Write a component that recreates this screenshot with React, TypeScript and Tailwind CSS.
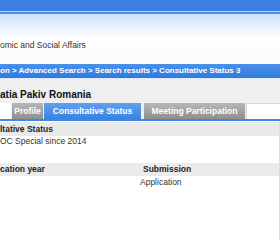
export default function App() {
    return <div className="w-[280px] h-[240px] overflow-hidden bg-white font-['Liberation_Sans',Arial,sans-serif] antialiased">
        {/* top band */}
        <div className="h-[11px] bg-[#3b80e2]" />
        <div className="h-px bg-[#b9d4f7]" />
        <div className="h-[2px] bg-[#4d8fe4]" />
        <div className="h-[50px] bg-gradient-to-b from-[#cfe1fa] via-white to-[#fafafa] pt-[26px]">
            <p className="text-[8.5px] leading-[10px] text-[#333] whitespace-nowrap">omic and Social Affairs</p>
        </div>

        {/* breadcrumb */}
        <div className="h-[14px] bg-gradient-to-b from-[#4a91ea] to-[#3179dd] flex items-center">
            <p className="text-[8px] leading-[10px] font-bold text-white whitespace-nowrap">
                on &gt; Advanced Search &gt; Search results &gt; Consultative Status 3
            </p>
        </div>
        <div className="h-px bg-[#dfe9f7]" />

        {/* title + tabs */}
        <div className="bg-[#efefef] pt-[10px]">
            <h1 className="text-[10px] leading-[11px] font-bold text-[#111] whitespace-nowrap">atia Pakiv Romania</h1>
            <div className="flex items-end h-[16px] mt-[3px] gap-px">
                <div className="w-[11px] h-full bg-white" />
                <div className="w-[31px] h-full bg-gradient-to-b from-[#b8b8b8] to-[#8e8e8e] flex items-center justify-center text-[8.5px] font-bold text-white">Profile</div>
                <div className="w-[97px] h-full bg-gradient-to-b from-[#5fa0ee] to-[#3a82e0] flex items-center justify-center text-[8.5px] font-bold text-white whitespace-nowrap">Consultative Status</div>
                <div className="w-px" />
                <div className="w-[101px] h-full bg-gradient-to-b from-[#b8b8b8] to-[#8e8e8e] flex items-center justify-center text-[8.5px] font-bold text-white whitespace-nowrap">Meeting Participation</div>
                <div className="flex-1 h-full bg-white border-t border-l border-[#d6d6d6]" />
            </div>
        </div>
        <div className="h-[2px] bg-[#3d86e5]" />

        {/* content */}
        <div className="h-[119px] border-r border-b border-[#dcdcdc]">
            <div className="mt-px h-[14px] bg-[#e9e9e9] flex items-center">
                <p className="text-[8.5px] font-bold text-[#222] whitespace-nowrap">ltative Status</p>
            </div>
            <p className="text-[8.5px] leading-[10px] text-[#333] whitespace-nowrap">OC Special since 2014</p>
            <div className="mt-[17px] h-[13px] bg-[#ebebeb] grid grid-cols-[143px_1fr] items-center text-[8.5px] font-bold text-[#222]">
                <span className="whitespace-nowrap">cation year</span>
                <span>Submission</span>
            </div>
            <div className="grid grid-cols-[140px_1fr] text-[8.5px] leading-[10px] text-[#333] pt-px">
                <span />
                <span>Application</span>
            </div>
        </div>
    </div>
}
